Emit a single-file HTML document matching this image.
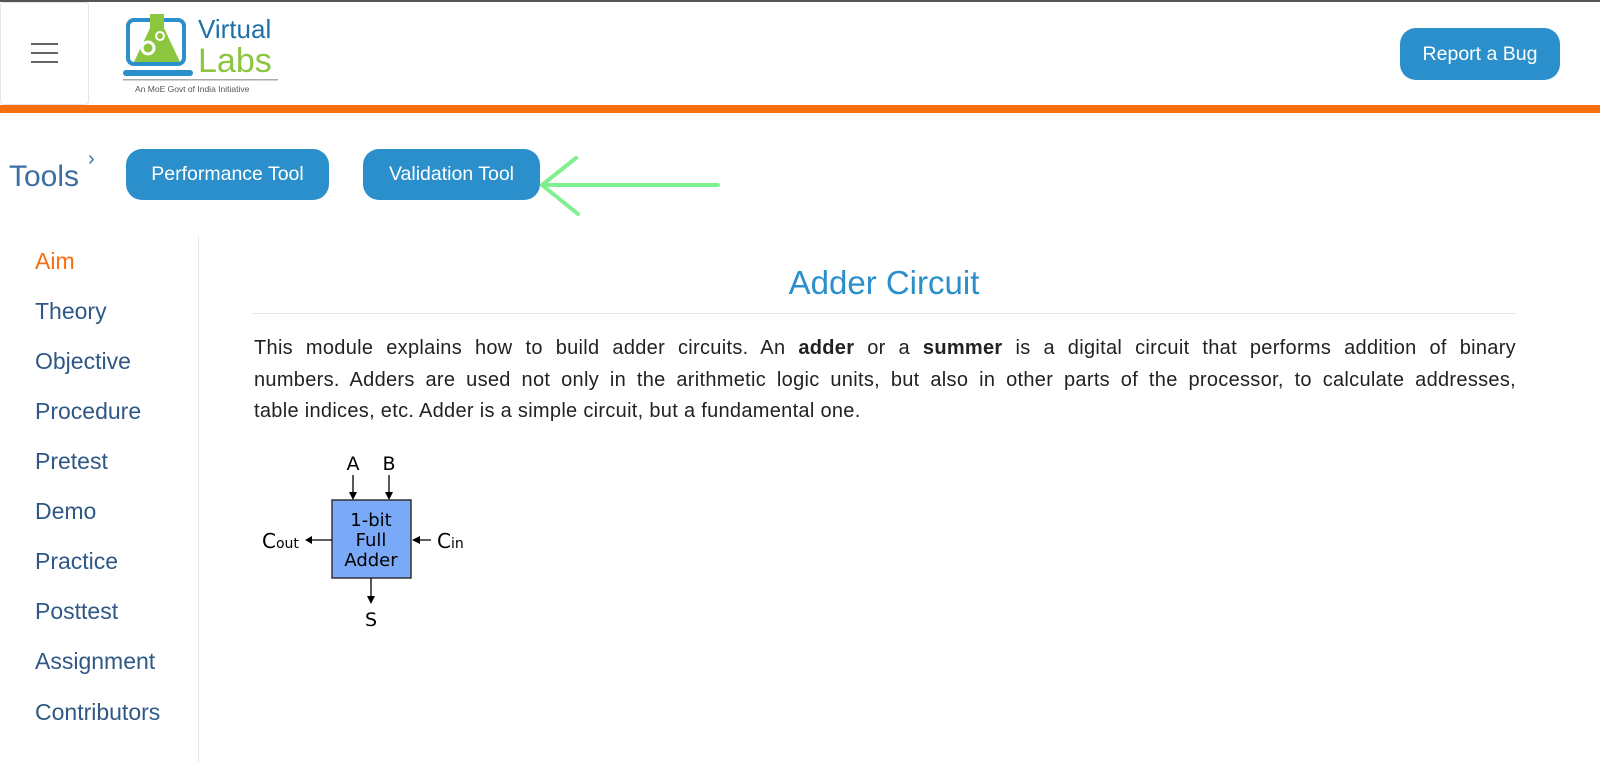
<!DOCTYPE html>
<html><head><meta charset="utf-8"><style>
*{margin:0;padding:0;box-sizing:border-box}
body{width:1600px;height:762px;background:#fff;font-family:"Liberation Sans",sans-serif;position:relative;overflow:hidden}
.a{position:absolute}
.btn{position:absolute;background:#2a8fcb;color:#fff;border-radius:16px;display:flex;align-items:center;justify-content:center;font-size:19.5px}
.side{position:absolute;left:35px;font-size:23px;color:#2f5886;line-height:26px}
div.t{position:absolute;left:254px;width:1262px;top:333px;font-size:20px;letter-spacing:0.3px;line-height:31.5px;color:#222}
div.t span{display:block;white-space:nowrap}
div.t span.j{text-align:justify;text-align-last:justify;white-space:normal}
</style></head><body>
<div class="a" style="left:0;top:0;width:1600px;height:2px;background:#555"></div>
<div class="a" style="left:0;top:2px;width:89px;height:103px;border:1px solid #e6e6e6;border-radius:4px"></div>
<div class="a" style="left:31px;top:43px;width:27px;height:2px;background:#666"></div>
<div class="a" style="left:31px;top:52px;width:27px;height:2px;background:#666"></div>
<div class="a" style="left:31px;top:61px;width:27px;height:2px;background:#666"></div>
<svg class="a" style="left:120px;top:8px" width="165" height="90">
<rect x="8" y="12" width="56" height="44" rx="6" fill="none" stroke="#2a8fcb" stroke-width="4"/>
<rect x="3" y="62" width="70" height="6" rx="3" fill="#2a8fcb"/>
<path d="M30 6h14v14l16 34H14l16-34z" fill="#8cc63f"/>
<circle cx="28" cy="40" r="6" fill="none" stroke="#fff" stroke-width="3"/>
<circle cx="40" cy="28" r="4" fill="none" stroke="#fff" stroke-width="2"/>
<text x="78" y="30" font-size="26" fill="#1f6fa8" font-family="Liberation Sans">Virtual</text>
<text x="78" y="64" font-size="34" fill="#8cc63f" font-family="Liberation Sans" font-weight="300">Labs</text>
<rect x="3" y="71" width="155" height="1.5" fill="#aaa"/>
<text x="15" y="84" font-size="8.5" fill="#555">An MoE Govt of India Initiative</text>
</svg>
<div class="btn" style="left:1400px;top:28px;width:160px;height:52px;font-size:19.5px">Report a Bug</div>
<div class="a" style="left:0;top:105px;width:1600px;height:8px;background:#f56e0f"></div>
<div class="a" style="left:9px;top:160px;font-size:30px;color:#3b6ea3">Tools</div>
<div class="a" style="left:88px;top:148px;font-size:20px;color:#3b6ea3">›</div>
<div class="btn" style="left:126px;top:149px;width:203px;height:51px">Performance Tool</div>
<div class="btn" style="left:363px;top:149px;width:177px;height:51px">Validation Tool</div>
<svg class="a" style="left:538px;top:150px" width="190" height="70"><path d="M4 35H180M4 35L38 8M4 35L40 64" stroke="#7ef08f" stroke-width="4" fill="none" stroke-linecap="round"/></svg>
<div class="a" style="left:198px;top:236px;width:1px;height:526px;background:#e6e6e6"></div>
<div class="side" style="top:248px;color:#f56e0f">Aim</div>
<div class="side" style="top:298px">Theory</div>
<div class="side" style="top:348px">Objective</div>
<div class="side" style="top:398px">Procedure</div>
<div class="side" style="top:448px">Pretest</div>
<div class="side" style="top:498px">Demo</div>
<div class="side" style="top:548px">Practice</div>
<div class="side" style="top:598px">Posttest</div>
<div class="side" style="top:648px">Assignment</div>
<div class="side" style="top:699px">Contributors</div>
<div class="a" style="left:252px;width:1264px;top:264px;text-align:center;font-size:33px;color:#2a8fcb">Adder Circuit</div>
<div class="a" style="left:252px;top:313px;width:1264px;height:1px;background:#e6e6e6"></div>
<div class="t"><span class="j">This module explains how to build adder circuits. An <b>adder</b> or a <b>summer</b> is a digital circuit that performs addition of binary</span><span class="j">numbers. Adders are used not only in the arithmetic logic units, but also in other parts of the processor, to calculate addresses,</span><span>table indices, etc. Adder is a simple circuit, but a fundamental one.</span></div>
<svg class="a" style="left:250px;top:440px" width="230" height="200" font-family="DejaVu Sans">
<rect x="82" y="60" width="79" height="78" fill="#7aaaf7" stroke="#333" stroke-width="1.5"/>
<text x="121" y="86" font-size="18" text-anchor="middle">1-bit</text>
<text x="121" y="106" font-size="18" text-anchor="middle">Full</text>
<text x="121" y="126" font-size="18" text-anchor="middle">Adder</text>
<text x="103" y="30" font-size="19" text-anchor="middle">A</text>
<text x="139" y="30" font-size="19" text-anchor="middle">B</text>
<path d="M103 35v20M139 35v20M82 100H62M121 138v22M181 100h-18" stroke="#000" stroke-width="1.3"/>
<path d="M99 52l4 8 4-8zM135 52l4 8 4-8zM62 96l-7 4 7 4zM117 156l4 8 4-8zM170 96l-8 4 8 4z"/>
<text x="12" y="108" font-size="20">C<tspan font-size="14">out</tspan></text>
<text x="187" y="108" font-size="20">C<tspan font-size="14">in</tspan></text>
<text x="121" y="186" font-size="19" text-anchor="middle">S</text>
</svg>
</body></html>
